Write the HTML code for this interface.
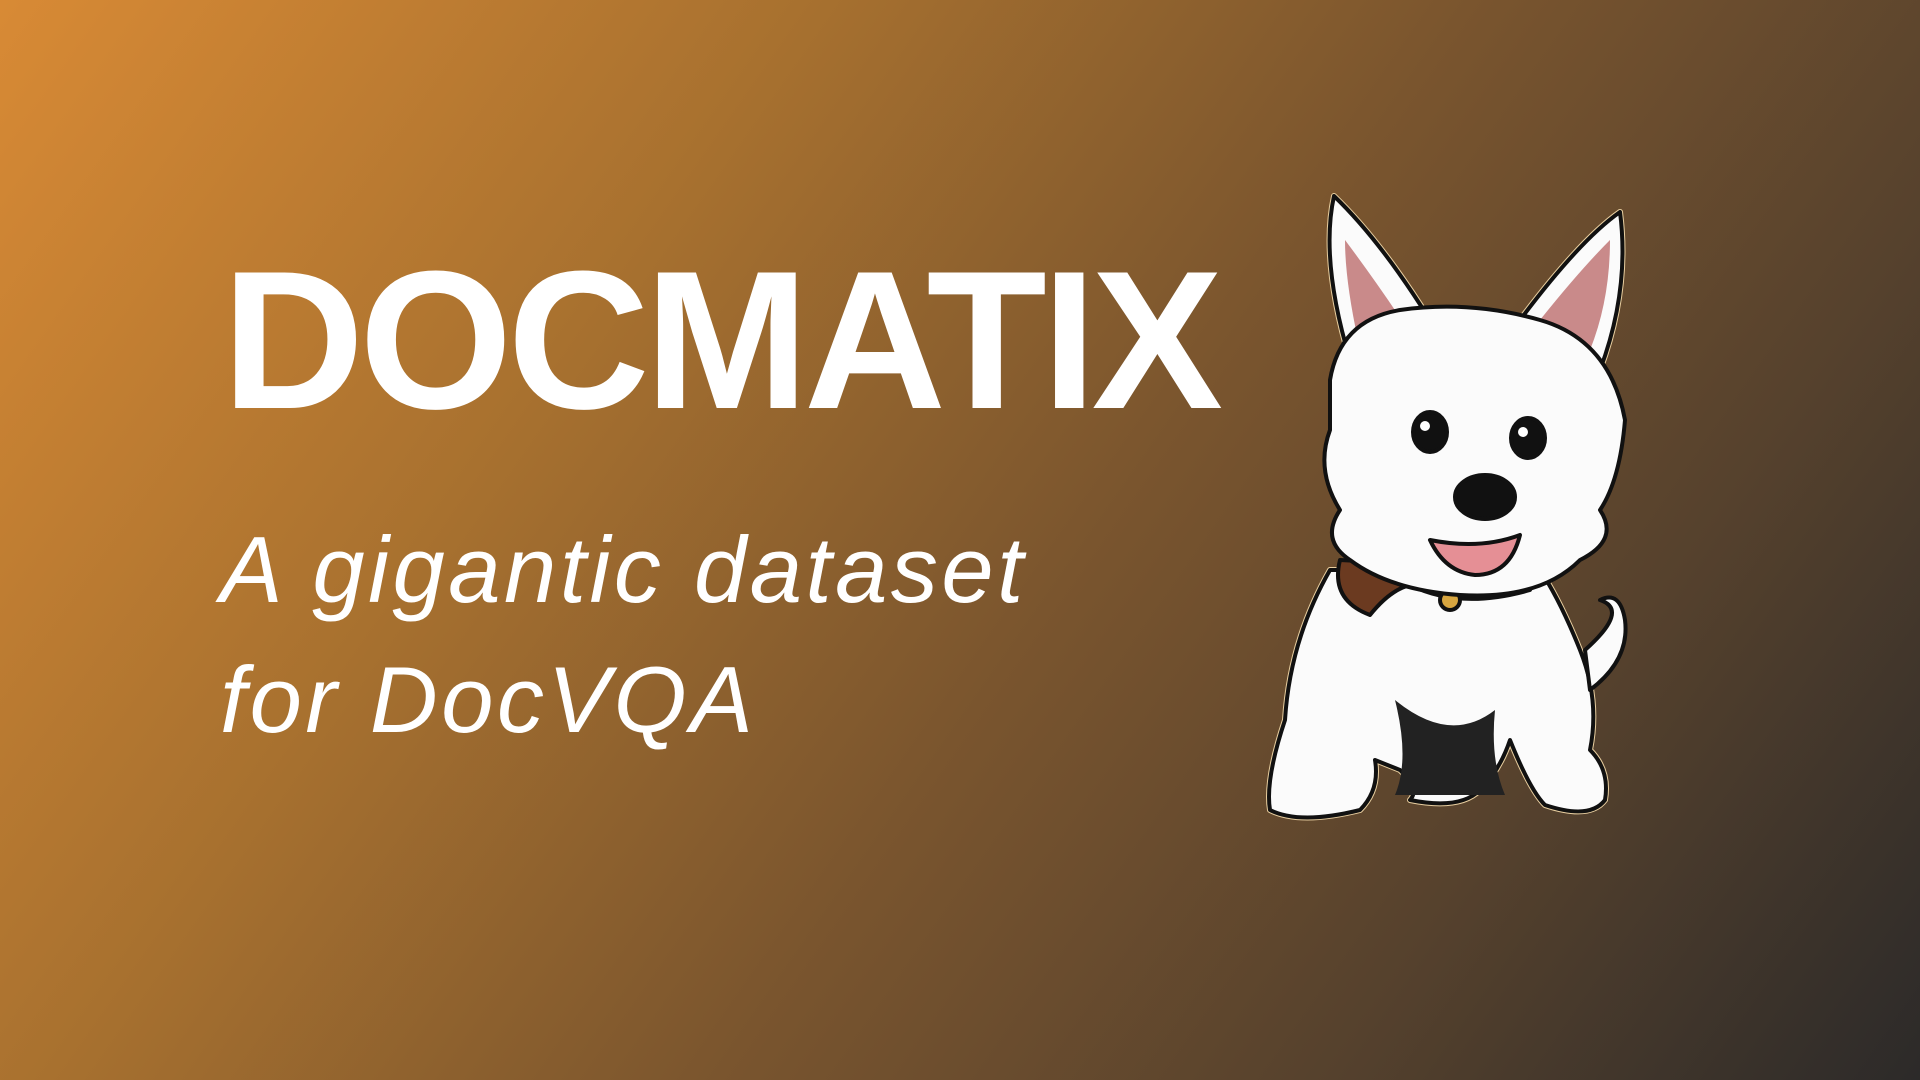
<!DOCTYPE html>
<html><head><meta charset="utf-8"><style>
html,body{margin:0;padding:0}
body{width:1920px;height:1080px;overflow:hidden;position:relative;
background:linear-gradient(125deg,#d88a35 0%,#a8712f 30%,#7a552e 55%,#55412d 78%,#2c2a29 100%);
font-family:"Liberation Sans",sans-serif;color:#fff}
.t{position:absolute;left:222px;top:242px;font-size:197px;font-weight:bold;letter-spacing:-5px;line-height:1}
.s{position:absolute;left:220px;top:505px;font-size:94px;font-style:italic;line-height:130px;letter-spacing:3.5px}
svg{position:absolute;left:0;top:0}
</style></head><body>
<div class="t">DOCMATIX</div>
<div class="s">A gigantic dataset<br>for DocVQA</div>
<svg width="1920" height="1080" viewBox="0 0 1920 1080">
<g stroke="#111" stroke-width="4" stroke-linejoin="round">
<path d="M1330 570 Q1290 640 1285 720 Q1265 780 1270 810 Q1300 825 1360 810 Q1380 790 1375 760 L1400 770 Q1420 790 1410 800 Q1460 810 1480 790 Q1500 770 1510 740 Q1530 790 1545 805 Q1590 820 1605 800 Q1610 770 1590 750 Q1600 700 1580 650 Q1560 600 1540 570 Z" fill="#fbfbfb" stroke="#e9cfa0" stroke-width="6"/>
<path d="M1330 570 Q1290 640 1285 720 Q1265 780 1270 810 Q1300 825 1360 810 Q1380 790 1375 760 L1400 770 Q1420 790 1410 800 Q1460 810 1480 790 Q1500 770 1510 740 Q1530 790 1545 805 Q1590 820 1605 800 Q1610 770 1590 750 Q1600 700 1580 650 Q1560 600 1540 570 Z" fill="#fbfbfb"/>
<path d="M1395 700 Q1410 760 1395 795 L1505 795 Q1490 760 1495 710 Q1450 745 1395 700 Z" fill="#222" stroke="none"/>
<path d="M1585 650 Q1630 610 1600 600 Q1620 590 1625 620 Q1630 660 1590 690 Z" fill="#fbfbfb"/>
<path d="M1340 560 Q1330 600 1370 615 Q1390 590 1410 585 Q1460 610 1530 590 L1535 570 Z" fill="#6b3a20"/>
<circle cx="1450" cy="600" r="10" fill="#d8a640"/>
<path d="M1350 360 Q1320 260 1334 196 Q1380 240 1430 320 Z" fill="#fbfbfb" stroke="#e9cfa0" stroke-width="6"/>
<path d="M1350 360 Q1320 260 1334 196 Q1380 240 1430 320 Z" fill="#fbfbfb"/>
<path d="M1358 340 Q1345 280 1345 240 Q1375 280 1405 325 Z" fill="#c98a8a" stroke="none"/>
<path d="M1520 320 Q1580 240 1620 212 Q1630 290 1600 370 Z" fill="#fbfbfb" stroke="#e9cfa0" stroke-width="6"/>
<path d="M1520 320 Q1580 240 1620 212 Q1630 290 1600 370 Z" fill="#fbfbfb"/>
<path d="M1540 320 Q1580 270 1610 240 Q1610 300 1590 350 Z" fill="#c98a8a" stroke="none"/>
<path d="M1330 380 Q1340 320 1400 310 Q1470 300 1540 320 Q1610 340 1625 420 Q1620 480 1600 510 Q1620 540 1580 560 Q1540 600 1460 595 Q1390 590 1350 560 Q1320 540 1340 510 Q1315 470 1330 430 Z" fill="#fbfbfb"/>
<ellipse cx="1430" cy="432" rx="17" ry="20" fill="#111"/>
<ellipse cx="1528" cy="438" rx="17" ry="20" fill="#111"/>
<circle cx="1425" cy="426" r="5" fill="#fff" stroke="none"/>
<circle cx="1523" cy="432" r="5" fill="#fff" stroke="none"/>
<ellipse cx="1485" cy="497" rx="30" ry="22" fill="#111"/>
<path d="M1430 540 Q1480 550 1520 535 Q1510 575 1475 575 Q1445 572 1430 540 Z" fill="#e58f95"/>
</g>
</svg>
</body></html>
